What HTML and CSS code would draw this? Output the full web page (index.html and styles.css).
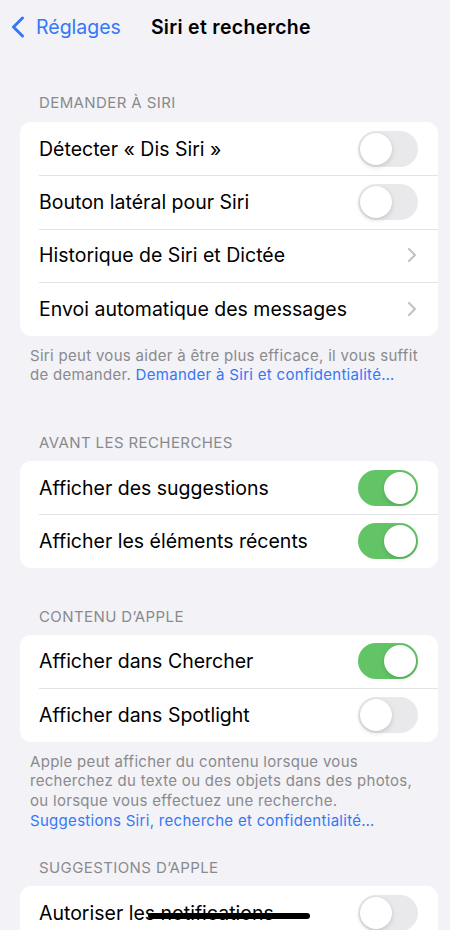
FILE: index.html
```html
<!DOCTYPE html>
<html lang="fr">
<head>
<meta charset="utf-8">
<title>Siri et recherche</title>
<link rel="stylesheet" href="styles.css">
</head>
<body>
<div class="screen">
  <header class="nav">
    <a class="back">
      <svg class="back-icon" width="14" height="22" viewBox="0 0 14 22"><path d="M11.5 2 L2.5 11 L11.5 20" fill="none" stroke="#3478f6" stroke-width="3" stroke-linecap="round" stroke-linejoin="round"/></svg>
      <span>Réglages</span>
    </a>
    <h1 class="title">Siri et recherche</h1>
  </header>

  <section class="group g1">
    <h2 class="group-header">Demander à Siri</h2>
    <div class="card">
      <div class="row"><span class="label">Détecter « Dis Siri »</span><span class="toggle"></span></div>
      <div class="row"><span class="label">Bouton latéral pour Siri</span><span class="toggle"></span></div>
      <div class="row"><span class="label">Historique de Siri et Dictée</span><svg class="chev" width="10" height="16" viewBox="0 0 10 16"><path d="M2 2 L8 8 L2 14" fill="none" stroke="#c4c4c7" stroke-width="2.2" stroke-linecap="round" stroke-linejoin="round"/></svg></div>
      <div class="row"><span class="label">Envoi automatique des messages</span><svg class="chev" width="10" height="16" viewBox="0 0 10 16"><path d="M2 2 L8 8 L2 14" fill="none" stroke="#c4c4c7" stroke-width="2.2" stroke-linecap="round" stroke-linejoin="round"/></svg></div>
    </div>
    <p class="footer">Siri peut vous aider à être plus efficace, il vous suffit de demander. <a class="link">Demander à Siri et confidentialité…</a></p>
  </section>

  <section class="group g2">
    <h2 class="group-header">Avant les recherches</h2>
    <div class="card">
      <div class="row"><span class="label">Afficher des suggestions</span><span class="toggle on"></span></div>
      <div class="row"><span class="label">Afficher les éléments récents</span><span class="toggle on"></span></div>
    </div>
  </section>

  <section class="group g3">
    <h2 class="group-header">Contenu d’Apple</h2>
    <div class="card">
      <div class="row"><span class="label">Afficher dans Chercher</span><span class="toggle on"></span></div>
      <div class="row"><span class="label">Afficher dans Spotlight</span><span class="toggle"></span></div>
    </div>
    <p class="footer">Apple peut afficher du contenu lorsque vous recherchez du texte ou des objets dans des photos, ou lorsque vous effectuez une recherche. <a class="link block">Suggestions Siri, recherche et confidentialité…</a></p>
  </section>

  <section class="group g4">
    <h2 class="group-header">Suggestions d’Apple</h2>
    <div class="card">
      <div class="row"><span class="label">Autoriser les notifications</span><span class="toggle"></span></div>
      <div class="row"><span class="label">Afficher dans la bibliothèque d’apps</span><span class="toggle"></span></div>
    </div>
  </section>

  <div class="home-indicator"></div>
</div>
</body>
</html>
```

FILE: styles.css
```css
html, body {
  margin: 0;
  padding: 0;
  background: #f2f2f7;
}
body {
  font-family: Inter, "Noto Sans", "Liberation Sans", sans-serif;
  color: #000;
  -webkit-font-smoothing: antialiased;
}
.screen {
  width: 450px;
  height: 930px;
  overflow: hidden;
  position: relative;
}
.nav {
  height: 54px;
  display: flex;
  align-items: center;
  padding-left: 11px;
}
.back {
  display: flex;
  align-items: center;
  gap: 11px;
  color: #3478f6;
  font-size: 19.5px;
  letter-spacing: 0;
}
.back-icon {
  display: block;
}
.title {
  margin: 0 0 0 30px;
  font-size: 19.5px;
  font-weight: 600;
  letter-spacing: 0.3px;
}
.group-header {
  margin: 0 0 8px;
  padding: 0 39px;
  font-size: 15px;
  font-weight: 400;
  line-height: 20px;
  color: #8a8a8e;
  text-transform: uppercase;
  letter-spacing: 0.4px;
}
.g1 { margin-top: 39px; }
.g1 .group-header { margin-bottom: 9px; }
.g2 { margin-top: 48px; }
.g3 { margin-top: 39px; }
.g4 { margin-top: 27.5px; }
.card {
  margin: 0 12px 0 20px;
  background: #fff;
  border-radius: 11px;
  overflow: hidden;
}
.row {
  height: 53.4px;
  display: flex;
  align-items: center;
  justify-content: space-between;
  padding: 0 20px 0 19px;
  position: relative;
}
.row + .row::before {
  content: "";
  position: absolute;
  left: 19px;
  right: 0;
  top: 0;
  height: 1px;
  background: #e3e3e6;
}
.label {
  font-size: 19.5px;
  letter-spacing: 0;
}
.chev {
  display: block;
  margin-right: 1px;
}
.toggle {
  width: 60px;
  height: 36px;
  border-radius: 18px;
  background: #e9e9eb;
  position: relative;
  flex: none;
}
.toggle::after {
  content: "";
  position: absolute;
  top: 2px;
  left: 2px;
  width: 32px;
  height: 32px;
  border-radius: 50%;
  background: #fff;
  box-shadow: 0 2px 5px rgba(0,0,0,0.15), 0 0 1px rgba(0,0,0,0.1);
}
.toggle.on {
  background: #63c466;
}
.toggle.on::after {
  left: 26px;
}
.footer {
  margin: 10px 0 0;
  padding: 0 28px 0 30px;
  font-size: 15px;
  line-height: 19.7px;
  color: #8a8a8e;
  letter-spacing: 0.3px;
}
.link {
  color: #3478f6;
}
.link.block {
  display: block;
}
.home-indicator {
  position: absolute;
  left: 148px;
  bottom: 11px;
  width: 162px;
  height: 6px;
  border-radius: 3px;
  background: #000;
}
```
